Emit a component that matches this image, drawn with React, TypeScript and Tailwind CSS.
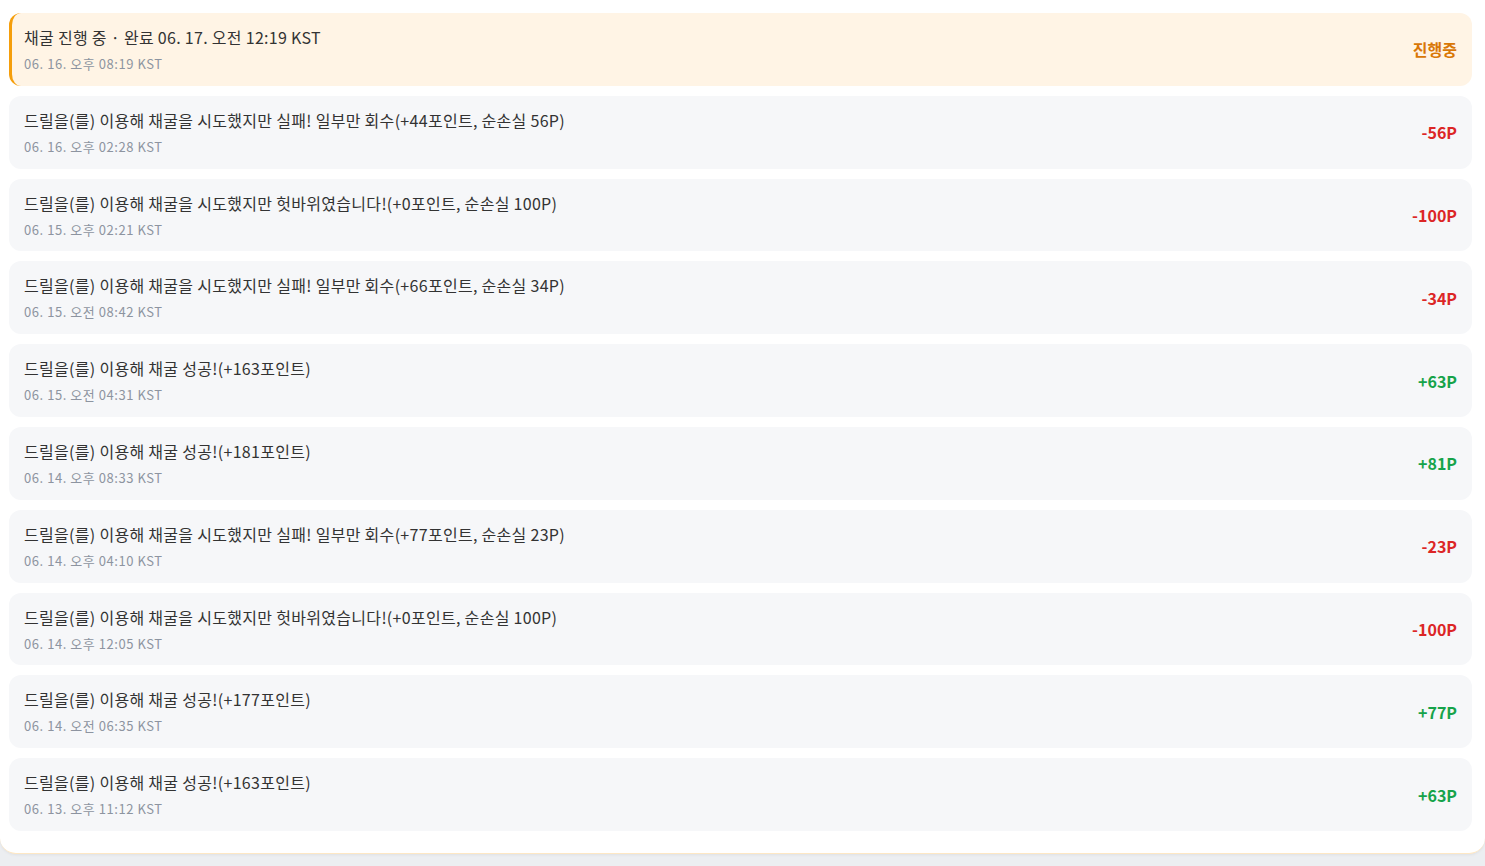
import React from 'react';

interface MiningLog {
  id: number;
  message: string;
  time: string;
  amount: number;
}

const logs: MiningLog[] = [
  { id: 1, message: '드릴을(를) 이용해 채굴을 시도했지만 실패! 일부만 회수(+44포인트, 순손실 56P)', time: '06. 16. 오후 02:28 KST', amount: -56 },
  { id: 2, message: '드릴을(를) 이용해 채굴을 시도했지만 헛바위였습니다!(+0포인트, 순손실 100P)', time: '06. 15. 오후 02:21 KST', amount: -100 },
  { id: 3, message: '드릴을(를) 이용해 채굴을 시도했지만 실패! 일부만 회수(+66포인트, 순손실 34P)', time: '06. 15. 오전 08:42 KST', amount: -34 },
  { id: 4, message: '드릴을(를) 이용해 채굴 성공!(+163포인트)', time: '06. 15. 오전 04:31 KST', amount: 63 },
  { id: 5, message: '드릴을(를) 이용해 채굴 성공!(+181포인트)', time: '06. 14. 오후 08:33 KST', amount: 81 },
  { id: 6, message: '드릴을(를) 이용해 채굴을 시도했지만 실패! 일부만 회수(+77포인트, 순손실 23P)', time: '06. 14. 오후 04:10 KST', amount: -23 },
  { id: 7, message: '드릴을(를) 이용해 채굴을 시도했지만 헛바위였습니다!(+0포인트, 순손실 100P)', time: '06. 14. 오후 12:05 KST', amount: -100 },
  { id: 8, message: '드릴을(를) 이용해 채굴 성공!(+177포인트)', time: '06. 14. 오전 06:35 KST', amount: 77 },
  { id: 9, message: '드릴을(를) 이용해 채굴 성공!(+163포인트)', time: '06. 13. 오후 11:12 KST', amount: 63 },
];

const formatAmount = (amount: number): string =>
  amount > 0 ? `+${amount}P` : `${amount}P`;

const App: React.FC = () => {
  return (
    <div
      className="min-h-screen bg-[#eceef1]"
      style={{ fontFamily: '"Noto Sans CJK KR", "Noto Sans", sans-serif' }}
    >
      <div className="rounded-b-2xl border-b border-[#fde7c4] bg-white pb-[22px] pl-[9px] pr-[13px] pt-[13px] shadow-[0_1px_3px_rgba(0,0,0,0.06)]">
        <ul className="flex flex-col gap-2.5">
          {/* 진행 중인 채굴 */}
          <li className="flex items-center justify-between rounded-xl border-l-[3px] border-[#f59e0b] bg-[#fff4e5] py-3 pl-3 pr-[15px]">
            <div>
              <p className="text-[16px] leading-6 tracking-[0.3px] text-[#333]">
                채굴 진행 중 · 완료 06. 17. 오전 12:19 KST
              </p>
              <p className="mt-[5px] text-[13px] leading-[19.8px] tracking-[0.55px] text-[#8d94a0]">
                06. 16. 오후 08:19 KST
              </p>
            </div>
            <span className="text-[16px] font-bold text-[#d97706]">진행중</span>
          </li>

          {logs.map((log) => (
            <li
              key={log.id}
              className="flex items-center justify-between rounded-xl bg-[#f6f7f9] px-[15px] py-3"
            >
              <div>
                <p className="text-[16px] leading-6 tracking-[0.3px] text-[#333]">
                  {log.message}
                </p>
                <p className="mt-[5px] text-[13px] leading-[19.8px] tracking-[0.55px] text-[#8d94a0]">
                  {log.time}
                </p>
              </div>
              <span
                className={
                  log.amount > 0
                    ? 'text-[16px] font-bold text-[#16a34a]'
                    : 'text-[16px] font-bold text-[#dc2626]'
                }
              >
                {formatAmount(log.amount)}
              </span>
            </li>
          ))}
        </ul>
      </div>
    </div>
  );
};

export default App;
